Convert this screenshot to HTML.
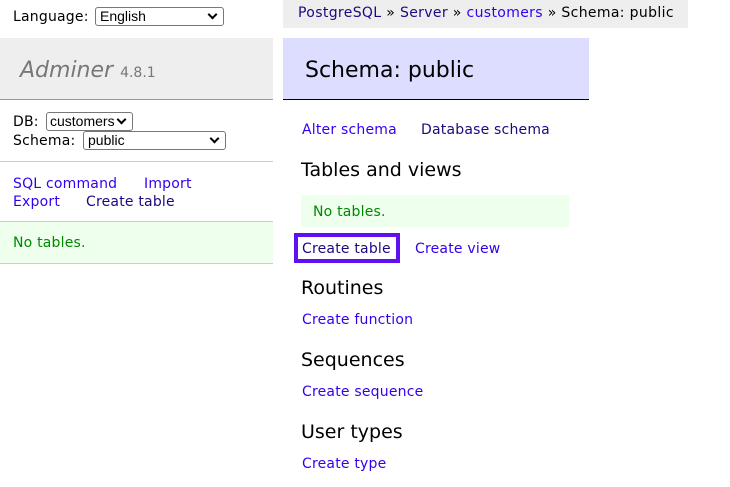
<!DOCTYPE html>
<html><head><meta charset="utf-8"><style>
body{margin:0;width:730px;height:487px;background:#fff;font-family:"DejaVu Sans",Verdana,sans-serif;font-size:14px;color:#000;position:relative;overflow:hidden}
.a{position:absolute;line-height:18px;white-space:nowrap;letter-spacing:0.2px}
.l{color:#3300ee}.v{color:#1a0a80}
.h{font-size:19px;line-height:24px;letter-spacing:0}
.sel{position:absolute;border:1px solid #777;border-radius:3px;background:#fff;line-height:16px;padding-left:4px;box-sizing:border-box;font-family:"Liberation Sans",Arial,sans-serif;font-size:14px}
.sel:after{content:"";position:absolute;right:7px;top:3px;width:5px;height:5px;border-right:2px solid #000;border-bottom:2px solid #000;transform:rotate(45deg)}
</style></head><body>
<div class="a" style="left:13px;top:8px">Language:</div>
<div class="sel" style="left:95px;top:7px;width:129px;height:19px">English</div>
<div style="position:absolute;left:0;top:38px;width:273px;height:61px;background:#eee;border-bottom:1px solid #999"></div>
<div class="a" style="left:20px;top:58px;font-size:22px;line-height:26px;font-style:italic;color:#777;letter-spacing:0">Adminer <span style="font-size:14px;font-style:normal">4.8.1</span></div>
<div class="a" style="left:13px;top:113px">DB:</div>
<div class="sel" style="left:46px;top:112px;width:87px;height:19px;padding-left:3px">customers</div>
<div class="a" style="left:13px;top:132px">Schema:</div>
<div class="sel" style="left:83px;top:131px;width:143px;height:19px">public</div>
<div style="position:absolute;left:0;top:161px;width:273px;border-top:1px solid #ccc"></div>
<div class="a l" style="left:13px;top:175px">SQL command</div>
<div class="a l" style="left:144px;top:175px">Import</div>
<div class="a l" style="left:13px;top:193px">Export</div>
<div class="a v" style="left:86px;top:193px">Create table</div>
<div style="position:absolute;left:0;top:221px;width:273px;height:41px;background:#eeffee;border-top:1px solid #ccc;border-bottom:1px solid #ccc"></div>
<div class="a" style="left:13px;top:234px;color:#080">No tables.</div>

<div style="position:absolute;left:283px;top:0;width:405px;height:28px;background:#eee"></div>
<div class="a" style="left:298px;top:4px;letter-spacing:0.35px"><span class="v">PostgreSQL</span> » <span class="v">Server</span> » <span class="l">customers</span> » Schema: public</div>
<div style="position:absolute;left:283px;top:38px;width:306px;height:61px;background:#ddf;border-bottom:1px solid #000"></div>
<div class="a" style="left:305px;top:58px;font-size:22px;line-height:26px;letter-spacing:0">Schema: public</div>
<div class="a l" style="left:302px;top:121px">Alter schema</div>
<div class="a v" style="left:421px;top:121px">Database schema</div>
<div class="a h" style="left:301px;top:158px">Tables and views</div>
<div style="position:absolute;left:301px;top:195px;width:268px;height:32px;background:#eeffee"></div>
<div class="a" style="left:313px;top:203px;color:#080">No tables.</div>
<div style="position:absolute;left:294px;top:233px;width:106px;height:30px;box-sizing:border-box;border:4px solid #6010f0"></div>
<div class="a v" style="left:302px;top:240px">Create table</div>
<div class="a l" style="left:415px;top:240px">Create view</div>
<div class="a h" style="left:301px;top:276px">Routines</div>
<div class="a l" style="left:302px;top:311px">Create function</div>
<div class="a h" style="left:301px;top:348px">Sequences</div>
<div class="a l" style="left:302px;top:383px">Create sequence</div>
<div class="a h" style="left:301px;top:420px">User types</div>
<div class="a l" style="left:302px;top:455px">Create type</div>
</body></html>
